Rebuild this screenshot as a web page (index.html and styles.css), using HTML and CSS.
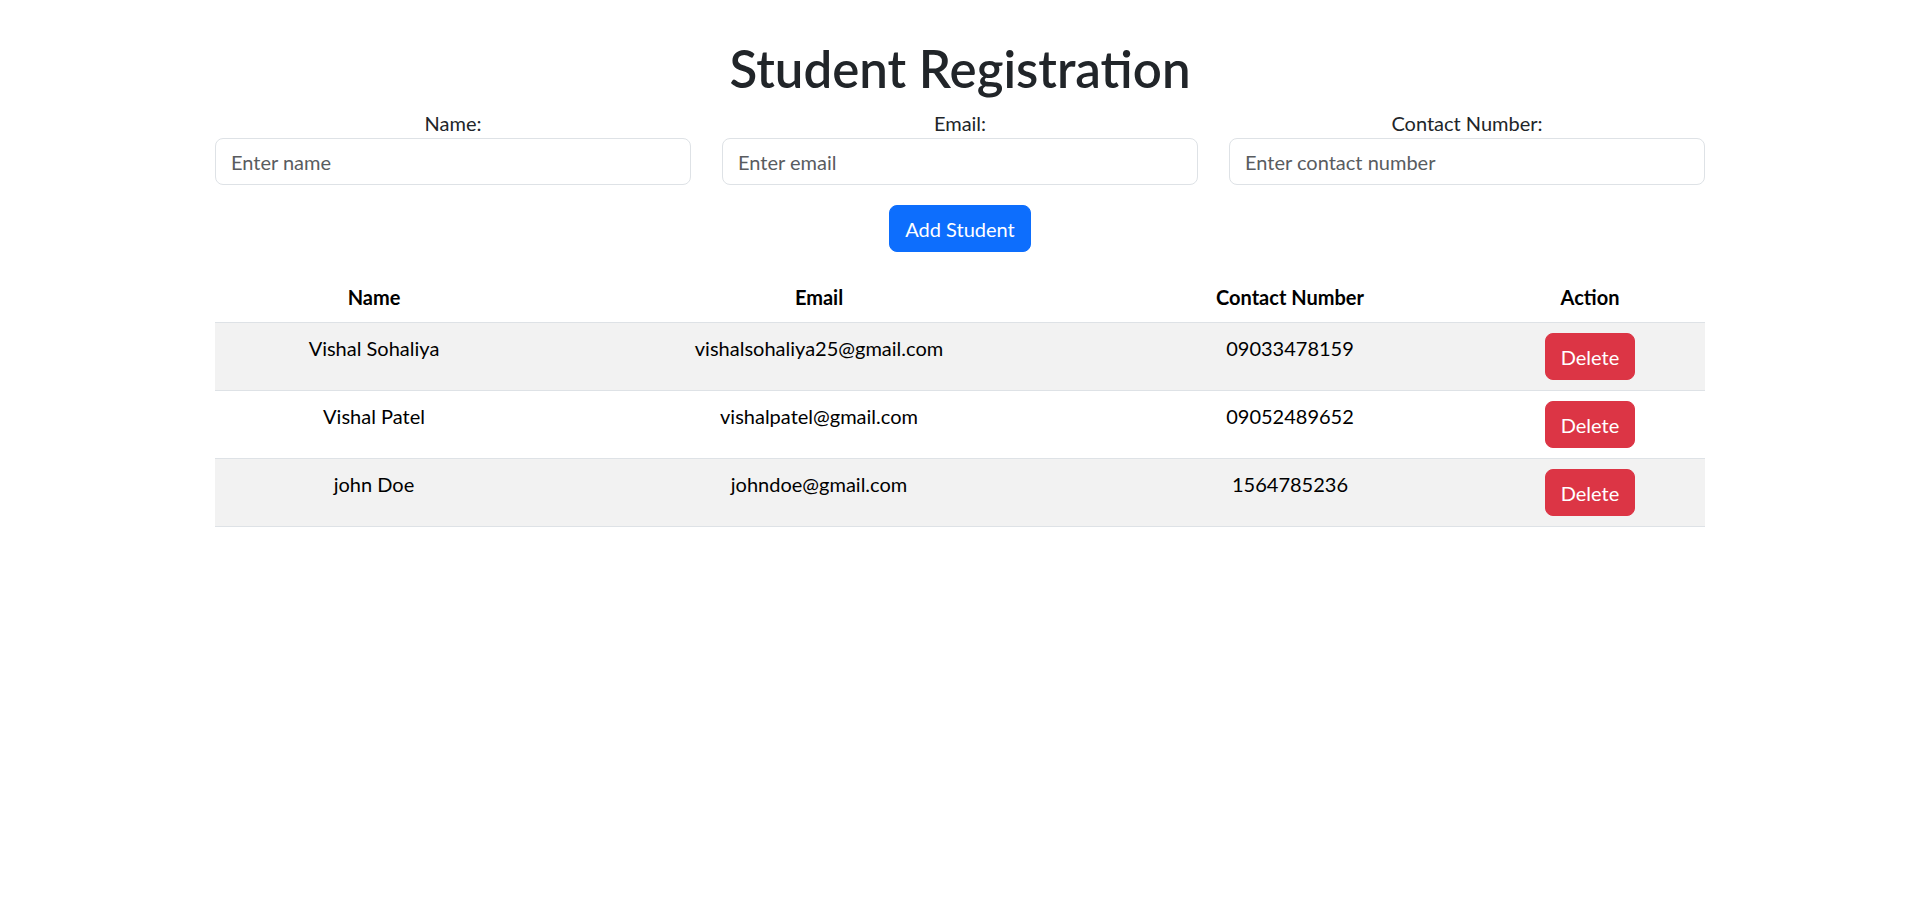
FILE: index.html
```html
<!DOCTYPE html>
<html lang="en">
<head>
<meta charset="utf-8">
<title>Student Registration</title>
<link rel="stylesheet" href="styles.css">
</head>
<body>
<div class="container">
  <h1 class="title">Student Registration</h1>
  <form class="form">
    <div class="fields">
      <div class="field">
        <label class="label" for="name">Name:</label>
        <input class="input" id="name" type="text" placeholder="Enter name">
      </div>
      <div class="field">
        <label class="label" for="email">Email:</label>
        <input class="input" id="email" type="email" placeholder="Enter email">
      </div>
      <div class="field">
        <label class="label" for="contact">Contact Number:</label>
        <input class="input" id="contact" type="text" placeholder="Enter contact number">
      </div>
    </div>
    <div class="actions">
      <button type="button" class="btn btn-primary">Add Student</button>
    </div>
  </form>
  <table class="table">
    <thead>
      <tr>
        <th class="col-name">Name</th>
        <th class="col-email">Email</th>
        <th class="col-contact">Contact Number</th>
        <th class="col-action">Action</th>
      </tr>
    </thead>
    <tbody>
      <tr class="striped">
        <td>Vishal Sohaliya</td>
        <td>vishalsohaliya25@gmail.com</td>
        <td>09033478159</td>
        <td><button type="button" class="btn btn-danger">Delete</button></td>
      </tr>
      <tr>
        <td>Vishal Patel</td>
        <td>vishalpatel@gmail.com</td>
        <td>09052489652</td>
        <td><button type="button" class="btn btn-danger">Delete</button></td>
      </tr>
      <tr class="striped">
        <td>john Doe</td>
        <td>johndoe@gmail.com</td>
        <td>1564785236</td>
        <td><button type="button" class="btn btn-danger">Delete</button></td>
      </tr>
    </tbody>
  </table>
</div>
</body>
</html>
```
FILE: styles.css
```css
* { box-sizing: border-box; }
html, body { margin: 0; padding: 0; background: #fff; }
body {
  font-family: Lato, "Open Sans", sans-serif;
  font-size: 20px;
  line-height: 30px;
  color: #212529;
}
.container {
  width: 1490px;
  margin: 0 0 0 215px;
  padding-top: 39px;
}
.title {
  margin: 0 0 10px;
  font-size: 51px;
  line-height: 60px;
  font-weight: 600;
  text-align: center;
  color: #212529;
}
.form { margin: 0; }
.fields {
  display: grid;
  grid-template-columns: 1fr 1fr 1fr;
  column-gap: 31px;
}
.field {
  display: flex;
  flex-direction: column;
  align-items: stretch;
}
.label {
  text-align: center;
  line-height: 29px;
}
.input {
  height: 47px;
  padding: 1px 15px 0;
  font: inherit;
  color: #212529;
  border: 1px solid #dee2e6;
  border-radius: 8px;
  background: #fff;
  outline: none;
}
.input::placeholder { color: #595c5f; opacity: 1; }
.actions {
  display: flex;
  justify-content: center;
  margin-top: 20px;
}
.btn {
  font: inherit;
  line-height: 30px;
  padding: 7.5px 15px;
  border: 1px solid transparent;
  border-radius: 8px;
  color: #fff;
  cursor: pointer;
}
.btn-primary { background: #0d6efd; border-color: #0d6efd; }
.btn-danger { background: #dc3545; border-color: #dc3545; }
.table {
  width: 100%;
  margin-top: 20px;
  border-collapse: collapse;
  table-layout: fixed;
  color: #000;
}
.table th, .table td {
  padding: 10px;
  text-align: center;
  vertical-align: top;
  border-bottom: 1px solid #dee2e6;
}
.table th { font-weight: 700; }
.col-name { width: 318px; }
.col-email { width: 572px; }
.col-contact { width: 370px; }
.col-action { width: 230px; }
.striped td { background: #f2f2f2; }
```
